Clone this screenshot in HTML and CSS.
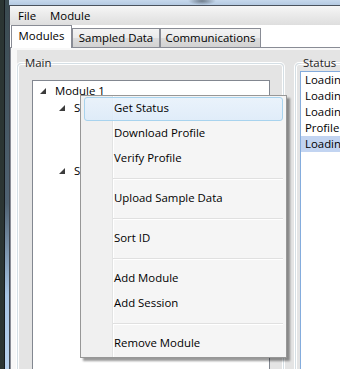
FILE: index.html
```html
<!DOCTYPE html>
<html>
<head>
<meta charset="utf-8">
<title>Modules</title>
<link rel="stylesheet" href="styles.css">
</head>
<body>
<div class="desk"></div>
<div class="window">
  <div class="glass"></div>
  <div class="client">
    <div class="menubar">
      <span class="menu-item">File</span>
      <span class="menu-item">Module</span>
    </div>
    <div class="tabstrip">
      <div class="tab tab-modules selected">Modules</div>
      <div class="tab tab-sampled">Sampled Data</div>
      <div class="tab tab-comms">Communications</div>
    </div>
    <div class="tabpanel">
      <div class="panel-body">
        <fieldset class="group group-main">
          <legend>Main</legend>
          <div class="tree">
            <div class="row"><svg class="toggle" width="6" height="6"><path d="M6 0V6H0Z"/></svg><span>Module 1</span></div>
            <div class="children">
              <div class="row"><svg class="toggle" width="6" height="6"><path d="M6 0V6H0Z"/></svg><span>Session 1</span></div>
              <div class="children collapsed-space"></div>
              <div class="row"><svg class="toggle" width="6" height="6"><path d="M6 0V6H0Z"/></svg><span>Session 2</span></div>
            </div>
          </div>
        </fieldset>
        <fieldset class="group group-status">
          <legend>Status</legend>
          <ul class="status-list">
            <li>Loading modules...</li>
            <li>Loading sessions...</li>
            <li>Loading profile...</li>
            <li>Profile loaded</li>
            <li class="selected">Loading status...</li>
          </ul>
        </fieldset>
      </div>
    </div>
  </div>
</div>

<div class="context-menu">
  <div class="mi hot">Get Status</div>
  <div class="mi">Download Profile</div>
  <div class="mi">Verify Profile</div>
  <div class="sep"></div>
  <div class="mi">Upload Sample Data</div>
  <div class="sep"></div>
  <div class="mi">Sort ID</div>
  <div class="sep"></div>
  <div class="mi">Add Module</div>
  <div class="mi">Add Session</div>
  <div class="sep"></div>
  <div class="mi">Remove Module</div>
</div>
</body>
</html>
```

FILE: styles.css
```css
body {
    margin: 0;
    width: 340px;
    height: 369px;
    overflow: hidden;
    display: flex;
    position: relative;
    font-family: "Open Sans", "Noto Sans", sans-serif;
    font-size: 11.4px;
    color: #1e1e1e;
    background-color: #2b3533;
}

/* desktop / glass frame on the left */
.desk {
    flex: 0 0 9px;
    background:
        linear-gradient(to right, #2b3533 0, #2b3533 4px, #151a1e 4px, #151a1e 5px, transparent 5px),
        linear-gradient(to bottom, #3a4a50 0%, #4f6272 55%, #a6c4e4 80%, #b8d2ee 100%);
}
.window {
    flex: 0 0 380px;
    height: 369px;
    display: flex;
    flex-direction: column;
}
.glass {
    flex: none;
    height: 5px;
    background:
        radial-gradient(ellipse 14px 4px at 193px 1px, rgba(40, 50, 60, 0.55), transparent),
        linear-gradient(#c6d8ec, #b5cae2);
}
.client {
    flex: 1;
    min-height: 0;
    display: flex;
    flex-direction: column;
    border-top: 1px solid #4a525d;
    border-left: 1px solid #3e454e;
    background-color: #fff;
}

/* menu bar */
.menubar {
    flex: none;
    height: 19px;
    display: flex;
    align-items: center;
    padding-left: 1px;
    background: linear-gradient(#f6f6f6, #ebebeb 45%, #dedede);
}
.menu-item {
    padding: 0 7px;
    line-height: 19px;
    color: #000;
}

/* tabs */
.tabstrip {
    flex: none;
    height: 22px;
    display: flex;
    align-items: flex-end;
    padding-left: 1px;
    background-color: #fff;
}
.tab {
    height: 19px;
    box-sizing: border-box;
    border: 1px solid #898c95;
    border-bottom: none;
    background: linear-gradient(#f3f3f3, #ebebeb 50%, #dddddd 50%, #d2d2d2);
    text-align: center;
    line-height: 17px;
    color: #000;
}
.tab.selected {
    height: 23px;
    margin-bottom: -1px;
    background: #fff;
    position: relative;
    z-index: 1;
    line-height: 20px;
}
.tab-modules { width: 61px; }
.tab-sampled { width: 88px; }
.tab-comms { width: 101px; }

.tabpanel {
    flex: 1;
    min-height: 0;
    overflow: hidden;
    display: flex;
    padding: 2px 0 0 6px;
    border-top: 1px solid #898c95;
    border-left: 1px solid #898c95;
    background-color: #f8f8f8;
}
.panel-body {
    flex: 1;
    display: flex;
    align-items: flex-start;
    gap: 11px;
    padding-top: 5px;
    background-color: #e4e4e4;
}

/* group boxes */
.group {
    flex: none;
    margin: 0;
    box-sizing: border-box;
    border: 1px solid #d5dfe5;
    border-radius: 4px;
    box-shadow: inset 0 0 0 1px #fff, 0 0 0 1px #fff;
    min-width: 0;
}
.group legend {
    padding: 0 2px;
    line-height: 16px;
    color: #1e1e1e;
}
.group-main {
    width: 267px;
    height: 330px;
    padding: 9px 13px 0 14px;
}
.group-main legend {
    margin-left: -9px;
}
.group-status {
    width: 120px;
    height: 330px;
    padding: 0 0 0 4px;
}
.group-status legend {
    margin-left: 1px;
}

/* tree */
.tree {
    height: 300px;
    box-sizing: border-box;
    border: 1px solid #828790;
    background-color: #fff;
    padding-top: 1px;
}
.row {
    height: 17px;
    display: flex;
    align-items: center;
    color: #000;
}
.toggle {
    flex: none;
    margin: 0 9px 0 7px;
    fill: #3c3c3c;
}
.children {
    padding-left: 19px;
}
.collapsed-space {
    height: 46px;
    padding: 0;
}

/* status list */
.status-list {
    list-style: none;
    margin: 0;
    padding: 0;
    height: 300px;
    border: 1px solid #84acdd;
    background-color: #fff;
    white-space: nowrap;
    overflow: hidden;
    color: #000;
}
.status-list li {
    height: 16px;
    line-height: 16px;
    padding-left: 4px;
}
.status-list li.selected {
    background-color: #c2d4f1;
}

/* context menu */
.context-menu {
    position: absolute;
    left: 80px;
    top: 95px;
    width: 207px;
    box-sizing: border-box;
    border: 1px solid #979797;
    background: linear-gradient(to right, #f0f0f0 0, #f0f0f0 31px, #e2e3e3 31px, #e2e3e3 32px, #fff 32px, #fff 33px, #f5f5f5 33px);
    box-shadow: 3px 3px 2px rgba(0, 0, 0, 0.4);
    color: #000;
}
.mi {
    height: 22px;
    margin: 1px 3px 1px 3px;
    padding-left: 29px;
    border: 1px solid transparent;
    border-radius: 3px;
    line-height: 20px;
}
.mi.hot {
    border-color: #a8d3ee;
    background: linear-gradient(rgba(232, 242, 252, 0.85), rgba(220, 235, 250, 0.85));
}
.sep {
    height: 1px;
    margin: 7px 3px 7px 32px;
    background-color: #e0e0e0;
    border-bottom: 1px solid #fff;
}
```
